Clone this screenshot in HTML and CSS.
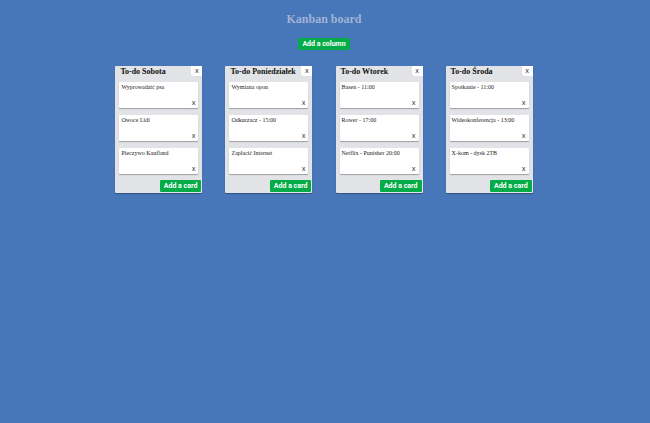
FILE: index.html
```html
<!DOCTYPE html>
<html lang="pl">
<head>
<meta charset="utf-8">
<title>Kanban board</title>
<link rel="stylesheet" href="styles.css">
</head>
<body>
<main class="board">
  <h1 class="board-title">Kanban board</h1>
  <button class="add add-column" type="button">Add a column</button>
  <div class="columns">
    <section class="column">
      <header class="column-head"><h2 class="column-title">To-do Sobota</h2><button class="close" type="button">X</button></header>
      <ul class="cards">
        <li class="card"><p class="card-text">Wyprowadzić psa</p><button class="remove" type="button">X</button></li>
        <li class="card"><p class="card-text">Owoce Lidl</p><button class="remove" type="button">X</button></li>
        <li class="card"><p class="card-text">Pieczywo Kaufland</p><button class="remove" type="button">X</button></li>
      </ul>
      <button class="add add-card" type="button">Add a card</button>
    </section>
    <section class="column">
      <header class="column-head"><h2 class="column-title">To-do Poniedziałek</h2><button class="close" type="button">X</button></header>
      <ul class="cards">
        <li class="card"><p class="card-text">Wymiana opon</p><button class="remove" type="button">X</button></li>
        <li class="card"><p class="card-text">Odkurzacz - 15:00</p><button class="remove" type="button">X</button></li>
        <li class="card"><p class="card-text">Zapłacić Internet</p><button class="remove" type="button">X</button></li>
      </ul>
      <button class="add add-card" type="button">Add a card</button>
    </section>
    <section class="column">
      <header class="column-head"><h2 class="column-title">To-do Wtorek</h2><button class="close" type="button">X</button></header>
      <ul class="cards">
        <li class="card"><p class="card-text">Basen - 11:00</p><button class="remove" type="button">X</button></li>
        <li class="card"><p class="card-text">Rower - 17:00</p><button class="remove" type="button">X</button></li>
        <li class="card"><p class="card-text">Netflix - Punisher 20:00</p><button class="remove" type="button">X</button></li>
      </ul>
      <button class="add add-card" type="button">Add a card</button>
    </section>
    <section class="column">
      <header class="column-head"><h2 class="column-title">To-do Środa</h2><button class="close" type="button">X</button></header>
      <ul class="cards">
        <li class="card"><p class="card-text">Spotkanie - 11:00</p><button class="remove" type="button">X</button></li>
        <li class="card"><p class="card-text">Wideokonferencja - 13:00</p><button class="remove" type="button">X</button></li>
        <li class="card"><p class="card-text">X-kom - dysk 2TB</p><button class="remove" type="button">X</button></li>
      </ul>
      <button class="add add-card" type="button">Add a card</button>
    </section>
  </div>
</main>
</body>
</html>
```
FILE: styles.css
```css
* {
  box-sizing: border-box;
  margin: 0;
  padding: 0;
}

body {
  min-height: 100vh;
  background: #4776b9;
  color: #222;
  font-family: "Liberation Serif", "Times New Roman", serif;
}

button {
  border: 0;
  cursor: pointer;
  font-family: Roboto, Arial, sans-serif;
}

.board {
  display: flex;
  flex-direction: column;
  align-items: center;
  padding: 11px 2px 0 0;
}

.board-title {
  color: #a0b4d6;
  font-size: 12px;
  line-height: 16px;
}

.add {
  padding: 0 4px;
  background: #04ac48;
  border-radius: 1px;
  color: #fff;
  font-size: 7px;
  font-weight: bold;
  line-height: 12px;
}

.add-column {
  margin: 11px 0 16px;
}

.columns {
  display: grid;
  grid-template-columns: repeat(4, 87px);
  justify-content: space-between;
  width: 65%;
  min-width: 418px;
  padding: 0 2px;
}

.column {
  display: flex;
  flex-direction: column;
  padding-bottom: 1px;
  background: #e1e3e6;
  border-radius: 1px;
  box-shadow: 0 1px 1px rgba(0, 0, 0, 0.3);
}

.column-head {
  display: flex;
  justify-content: space-between;
  align-items: flex-start;
  height: 16px;
  padding-left: 5px;
}

.column-title {
  color: #111;
  font-size: 8px;
  line-height: 12px;
  white-space: nowrap;
}

.close,
.remove {
  background: #fff;
  color: #333;
  font-size: 6px;
  line-height: 10px;
}

.close {
  width: 11px;
  border-radius: 0 0 0 3px;
}

.cards {
  display: grid;
  gap: 7px;
  padding: 0 4px;
  list-style: none;
}

.card {
  display: flex;
  flex-direction: column;
  justify-content: space-between;
  height: 26px;
  padding: 1px 3px 0 2px;
  background: #fff;
  border-radius: 1px;
  box-shadow: 0 1px 1px rgba(0, 0, 0, 0.3);
}

.card-text {
  font-size: 6px;
  line-height: 8px;
  white-space: nowrap;
}

.remove {
  align-self: flex-end;
}

.add-card {
  align-self: flex-end;
  margin: 6px 1px 0 0;
}
```
